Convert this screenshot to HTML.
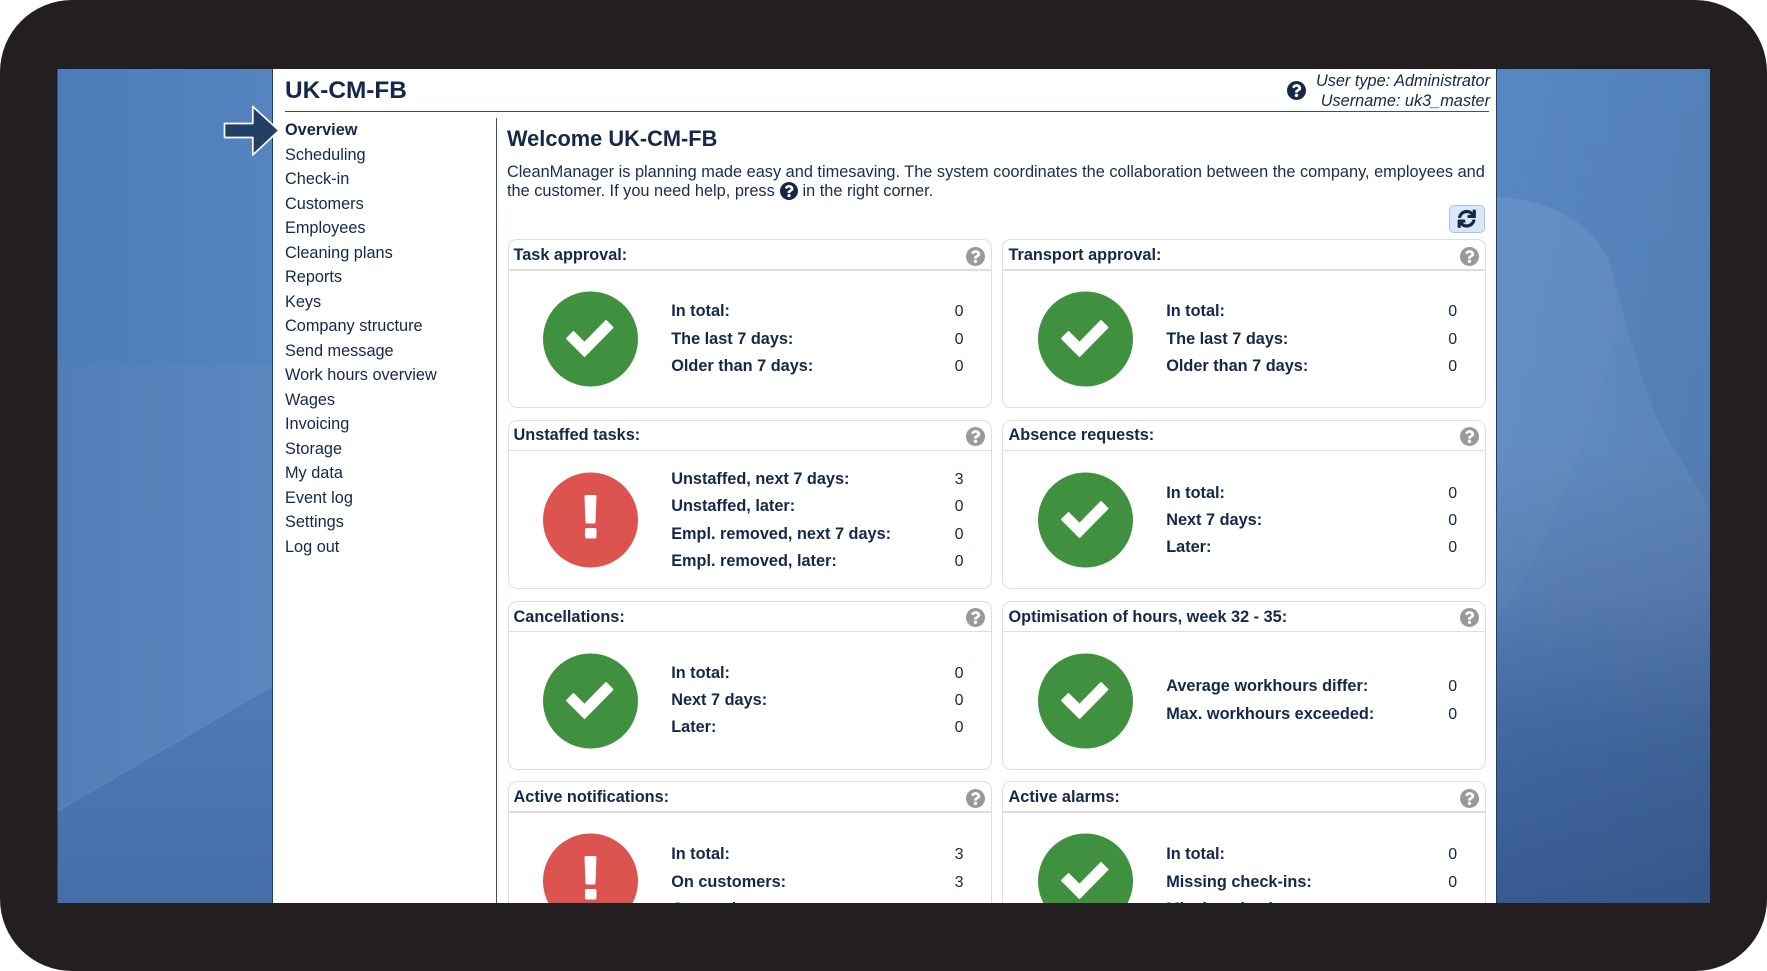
<!DOCTYPE html>
<html><head><meta charset="utf-8"><title>UK-CM-FB</title>
<style>
html,body{margin:0;padding:0;background:#fff}
body{width:1767px;height:971px;overflow:hidden;position:relative;font-family:"Liberation Sans",Arial,sans-serif;color:#14284a}
#shell{position:absolute;left:0;top:0;width:1767px;height:971px;background:#231f20;border-radius:72px}
#app{position:absolute;left:0;top:0;width:1767px;height:903px;overflow:hidden}
#bg{position:absolute;left:0;top:0}
#panel{position:absolute;left:272px;top:69px;width:1225px;height:834px;background:#fff;box-sizing:border-box;border-left:1.5px solid #1d3b66;border-right:1.5px solid #1d3b66}
.a{position:absolute;white-space:nowrap}
#hl{position:absolute;left:285px;top:111px;width:1204px;height:1px;background:#3c4e70}
#vl{position:absolute;left:496px;top:118px;width:1px;height:785px;background:#3e5070}
.m{position:absolute;left:285px;font-size:16.3px;line-height:24px;white-space:nowrap}
.c{position:absolute;width:484px;height:169px;box-sizing:border-box;border:1.5px solid #dedede;border-radius:9px}
.c.x{left:507.5px;width:484.5px}
.c.y{left:1002px}
.c h3{position:absolute;left:5px;top:5.2px;margin:0;font-size:16.3px;line-height:20px;font-weight:bold;white-space:nowrap}
.c.y h3{left:5.5px}
.c.e h3{top:4.2px}
.c .l{position:absolute;left:0;right:0;top:29px;height:1.5px;background:#dedede}
.c .q{position:absolute;left:456.5px;top:6.5px;width:19px;height:19px;fill:#999}
.c.x .q{left:457px}
.c .s{position:absolute;left:33.5px;top:51px;width:95px;height:96px}
.c.x .s{left:34px}
.c.y .s{left:34.5px}
.rows{position:absolute;left:162.7px;top:1px;width:292.3px;height:196.4px;display:flex;flex-direction:column;justify-content:center}
.c.y .rows{left:163.2px;width:291px}
.c.e .rows{top:2px}
.r{display:flex;justify-content:space-between;line-height:27.2px;font-size:16px;white-space:nowrap}
.r b{font-size:16.3px}
</style></head><body>
<svg width="0" height="0" style="position:absolute">
<defs>
<symbol id="q" viewBox="8 8 496 496"><path d="M504 256c0 136.997-111.043 248-248 248S8 392.997 8 256C8 119.083 119.043 8 256 8s248 111.083 248 248zM262.655 90c-54.497 0-89.255 22.957-116.549 63.758-3.536 5.286-2.353 12.415 2.715 16.258l34.699 26.31c5.205 3.947 12.621 3.008 16.665-2.122 17.864-22.658 30.113-35.797 57.303-35.797 20.429 0 45.698 13.148 45.698 32.958 0 14.976-12.363 22.667-32.534 33.976C247.128 238.528 216 254.941 216 296v4c0 6.627 5.373 12 12 12h56c6.627 0 12-5.373 12-12v-1.333c0-28.462 83.186-29.647 83.186-106.667 0-58.002-60.165-102-116.531-102zM256 338c-25.365 0-46 20.635-46 46 0 25.364 20.635 46 46 46s46-20.636 46-46c0-25.365-20.635-46-46-46z"/></symbol>
<symbol id="ok" viewBox="0 0 95 96"><circle cx="47.5" cy="48" r="47.5" fill="#3f913f"/><polygon points="30.5,41.1 41.5,52.1 63,30.1 69.4,36.5 41.5,64.9 24.1,47.5" fill="#fff" stroke="#fff" stroke-width="2" stroke-linejoin="round"/></symbol>
<symbol id="err" viewBox="0 0 95 96"><circle cx="47.5" cy="48" r="47.5" fill="#dc5350"/><path d="M41.5 24.5 Q41.5 23 43 23 H52 Q53.5 23 53.5 24.5 L52.5 50 Q52.5 51.5 51 51.5 H44 Q42.5 51.5 42.5 50 Z" fill="#fff"/><rect x="42" y="56" width="11.5" height="10.5" rx="2" fill="#fff"/></symbol>
<linearGradient id="lt" x1="0" y1="0" x2="1" y2="0"><stop offset="0" stop-color="#4e7cb9"/><stop offset="1" stop-color="#5584bf"/></linearGradient>
<linearGradient id="lm" x1="0" y1="0" x2="1" y2="0"><stop offset="0" stop-color="#527eb7"/><stop offset="1" stop-color="#5a87bf"/></linearGradient>
<linearGradient id="lb" x1="0" y1="0" x2="0" y2="1"><stop offset="0" stop-color="#4e7bb5"/><stop offset="1" stop-color="#456ea8"/></linearGradient>
<linearGradient id="rb" x1="0" y1="0" x2="0" y2="1"><stop offset="0" stop-color="#5887c2"/><stop offset=".45" stop-color="#5784bd"/><stop offset=".62" stop-color="#5279b0"/><stop offset=".78" stop-color="#4269a0"/><stop offset="1" stop-color="#375b91"/></linearGradient>
<linearGradient id="rl" x1="0" y1="0" x2="0" y2="1"><stop offset="0" stop-color="#fff" stop-opacity=".06"/><stop offset=".5" stop-color="#fff" stop-opacity=".06"/><stop offset="1" stop-color="#fff" stop-opacity="0"/></linearGradient>
<linearGradient id="rs" x1="0" y1="0" x2="1" y2="0"><stop offset="0" stop-color="#000" stop-opacity="0"/><stop offset="1" stop-color="#000" stop-opacity=".05"/></linearGradient>
</defs>
</svg>
<div id="shell"></div>
<div id="app">
<svg id="bg" width="1767" height="903" viewBox="0 0 1767 903">
<rect x="57.5" y="69" width="216" height="295" fill="url(#lt)"/>
<rect x="57.5" y="363" width="216" height="540" fill="url(#lm)"/>
<polygon points="57.5,811 273,686 273,903 57.5,903" fill="url(#lb)"/>
<path d="M57.5 811 L273 686" stroke="#6a93c6" stroke-opacity=".45" stroke-width="1.2" fill="none"/>
<rect x="1496" y="69" width="214" height="834" fill="url(#rb)"/>
<path d="M1496 197 C1560 200 1600 230 1612 270 C1625 320 1640 380 1660 425 C1680 460 1700 490 1710 510 L1710 760 L1496 760 Z" fill="url(#rl)"/>
<path d="M1496 197 C1560 200 1600 230 1612 270 L1616 320 C1600 420 1540 560 1496 624 Z" fill="#fff" fill-opacity=".025"/>
<rect x="1496" y="69" width="214" height="834" fill="url(#rs)"/>
</svg>
<div id="panel"></div>
<svg class="a" style="left:220px;top:102px" width="64" height="58" viewBox="220 102 64 58"><polygon points="224.5,123.5 252.8,123.5 252.8,106.5 279,130.5 252.8,155 252.8,137.5 224.5,137.5" fill="#243f64" stroke="#fff" stroke-width="1.7" stroke-linejoin="round"/></svg>

<div class="a" style="left:285px;top:77px;font-size:24.4px;line-height:28px;font-weight:bold">UK-CM-FB</div>
<svg class="a" style="left:1287px;top:80.5px;width:19px;height:19px;fill:#14284a"><use href="#q"/></svg>
<div class="a" style="right:277px;top:71px;font-size:16.3px;line-height:20px;font-style:italic">User type: Administrator</div>
<div class="a" style="right:277px;top:91px;font-size:16.3px;line-height:20px;font-style:italic">Username: uk3_master</div>
<div id="hl"></div><div id="vl"></div>

<div class="m" style="top:118px;font-weight:bold">Overview</div>
<div class="m" style="top:142.5px">Scheduling</div>
<div class="m" style="top:167px">Check-in</div>
<div class="m" style="top:191.5px">Customers</div>
<div class="m" style="top:216px">Employees</div>
<div class="m" style="top:240.5px">Cleaning plans</div>
<div class="m" style="top:265px">Reports</div>
<div class="m" style="top:289.5px">Keys</div>
<div class="m" style="top:314px">Company structure</div>
<div class="m" style="top:338.5px">Send message</div>
<div class="m" style="top:363px">Work hours overview</div>
<div class="m" style="top:387.5px">Wages</div>
<div class="m" style="top:412px">Invoicing</div>
<div class="m" style="top:436.5px">Storage</div>
<div class="m" style="top:461px">My data</div>
<div class="m" style="top:485.5px">Event log</div>
<div class="m" style="top:510px">Settings</div>
<div class="m" style="top:534.5px">Log out</div>

<div class="a" style="left:507px;top:126px;font-size:21.8px;line-height:26px;font-weight:bold">Welcome UK-CM-FB</div>
<div class="a" style="left:507px;top:161.5px;font-size:16.34px;line-height:20px;color:#1b2c4c">CleanManager is planning made easy and timesaving. The system coordinates the collaboration between the company, employees and</div>
<div class="a" style="left:507px;top:180.5px;font-size:16.34px;line-height:20px;color:#1b2c4c">the customer. If you need help, press</div>
<svg class="a" style="left:779.5px;top:181.5px;width:18px;height:18px;fill:#14284a"><use href="#q"/></svg>
<div class="a" style="left:802.5px;top:180.5px;font-size:16.34px;line-height:20px;color:#1b2c4c">in the right corner.</div>

<div class="a" style="left:1449px;top:205px;width:36px;height:28px;box-sizing:border-box;background:#dae7f6;border:1.5px solid #a5c4e8;border-radius:5px"></div>
<svg class="a" style="left:1458px;top:210px;width:17.5px;height:17.5px;fill:#14284a;stroke:#14284a;stroke-width:22;overflow:visible" viewBox="0 0 512 512"><path d="M440.65 12.57l4 82.77A247.16 247.16 0 0 0 255.83 8C134.73 8 33.91 94.92 12.29 209.82A12 12 0 0 0 24.09 224h49.05a12 12 0 0 0 11.67-9.26 175.91 175.91 0 0 1 317-56.94l-101.46-4.86a12 12 0 0 0-12.57 12v47.41a12 12 0 0 0 12 12H500a12 12 0 0 0 12-12V12a12 12 0 0 0-12-12h-47.37a12 12 0 0 0-11.98 12.57zM255.83 432a175.61 175.61 0 0 1-146-77.8l101.8 4.87a12 12 0 0 0-12.57-12v-47.4a12 12 0 0 0-12-12H12a12 12 0 0 0-12 12V500a12 12 0 0 0 12 12h47.35a12 12 0 0 0 12-12.6l-4.15-82.57A247.17 247.17 0 0 0 255.83 504c121.11 0 221.93-86.92 243.55-201.82a12 12 0 0 0-11.8-14.18h-49.05a12 12 0 0 0-11.67 9.26A175.86 175.86 0 0 1 255.83 432z"/></svg>

<div class="c x" style="top:239px"><h3>Task approval:</h3><div class="l"></div><svg class="q"><use href="#q"/></svg><svg class="s"><use href="#ok"/></svg>
<div class="rows"><div class="r"><b>In total:</b><span>0</span></div><div class="r"><b>The last 7 days:</b><span>0</span></div><div class="r"><b>Older than 7 days:</b><span>0</span></div></div></div>
<div class="c y" style="top:239px"><h3>Transport approval:</h3><div class="l"></div><svg class="q"><use href="#q"/></svg><svg class="s"><use href="#ok"/></svg>
<div class="rows"><div class="r"><b>In total:</b><span>0</span></div><div class="r"><b>The last 7 days:</b><span>0</span></div><div class="r"><b>Older than 7 days:</b><span>0</span></div></div></div>

<div class="c x e" style="top:419.5px"><h3>Unstaffed tasks:</h3><div class="l"></div><svg class="q"><use href="#q"/></svg><svg class="s"><use href="#err"/></svg>
<div class="rows"><div class="r"><b>Unstaffed, next 7 days:</b><span>3</span></div><div class="r"><b>Unstaffed, later:</b><span>0</span></div><div class="r"><b>Empl. removed, next 7 days:</b><span>0</span></div><div class="r"><b>Empl. removed, later:</b><span>0</span></div></div></div>
<div class="c y e" style="top:419.5px"><h3>Absence requests:</h3><div class="l"></div><svg class="q"><use href="#q"/></svg><svg class="s"><use href="#ok"/></svg>
<div class="rows"><div class="r"><b>In total:</b><span>0</span></div><div class="r"><b>Next 7 days:</b><span>0</span></div><div class="r"><b>Later:</b><span>0</span></div></div></div>

<div class="c x" style="top:600.5px"><h3>Cancellations:</h3><div class="l"></div><svg class="q"><use href="#q"/></svg><svg class="s"><use href="#ok"/></svg>
<div class="rows"><div class="r"><b>In total:</b><span>0</span></div><div class="r"><b>Next 7 days:</b><span>0</span></div><div class="r"><b>Later:</b><span>0</span></div></div></div>
<div class="c y" style="top:600.5px"><h3>Optimisation of hours, week 32 - 35:</h3><div class="l"></div><svg class="q"><use href="#q"/></svg><svg class="s"><use href="#ok"/></svg>
<div class="rows"><div class="r"><b>Average workhours differ:</b><span>0</span></div><div class="r"><b>Max. workhours exceeded:</b><span>0</span></div></div></div>

<div class="c x" style="top:781px"><h3>Active notifications:</h3><div class="l"></div><svg class="q"><use href="#q"/></svg><svg class="s"><use href="#err"/></svg>
<div class="rows" style="top:2px"><div class="r"><b>In total:</b><span>3</span></div><div class="r"><b>On customers:</b><span>3</span></div><div class="r"><b>On employees:</b><span>0</span></div></div></div>
<div class="c y" style="top:781px"><h3>Active alarms:</h3><div class="l"></div><svg class="q"><use href="#q"/></svg><svg class="s"><use href="#ok"/></svg>
<div class="rows" style="top:2px"><div class="r"><b>In total:</b><span>0</span></div><div class="r"><b>Missing check-ins:</b><span>0</span></div><div class="r"><b>Missing check-outs:</b><span>0</span></div></div></div>
</div>
</body></html>
